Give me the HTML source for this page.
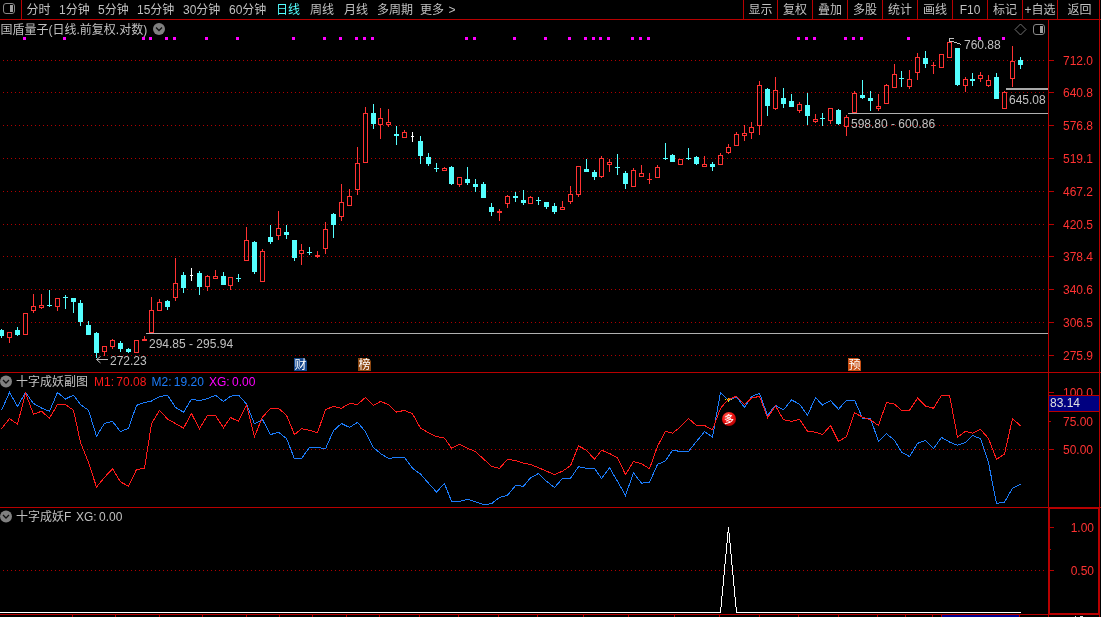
<!DOCTYPE html>
<html><head><meta charset="utf-8"><title>chart</title>
<style>
html,body{margin:0;padding:0;background:#000;}
body{width:1101px;height:617px;position:relative;overflow:hidden;font-family:"Liberation Sans","Noto Sans CJK SC",sans-serif;}
svg{position:absolute;left:0;top:0;}
.layer{position:absolute;left:0;top:0;width:1101px;height:617px;will-change:transform;}
span{position:absolute;white-space:nowrap;line-height:16px;font-size:12px;}
span.cj{}
</style></head><body>
<svg width="1101" height="617" viewBox="0 0 1101 617" shape-rendering="crispEdges">
<rect x="0" y="19" width="1101" height="1" fill="#b80000" />
<rect x="21" y="0" width="1" height="19" fill="#b80000" />
<rect x="743" y="0" width="1" height="19" fill="#b80000" />
<rect x="777" y="0" width="1" height="19" fill="#b80000" />
<rect x="812" y="0" width="1" height="19" fill="#b80000" />
<rect x="847" y="0" width="1" height="19" fill="#b80000" />
<rect x="882" y="0" width="1" height="19" fill="#b80000" />
<rect x="917" y="0" width="1" height="19" fill="#b80000" />
<rect x="952" y="0" width="1" height="19" fill="#b80000" />
<rect x="987" y="0" width="1" height="19" fill="#b80000" />
<rect x="1022" y="0" width="1" height="19" fill="#b80000" />
<rect x="1057" y="0" width="1" height="19" fill="#b80000" />
<rect x="3.5" y="3.5" width="11" height="10" rx="2.5" fill="none" stroke="#888888" stroke-width="1" shape-rendering="auto"/>
<rect x="10" y="5" width="3" height="7" fill="#a0a0a0" />
<line x1="3" y1="60.5" x2="1046" y2="60.5" stroke="#b00000" stroke-width="1" stroke-dasharray="1 3"/>
<rect x="1048" y="60" width="6" height="1" fill="#b80000" />
<line x1="3" y1="92.5" x2="1046" y2="92.5" stroke="#b00000" stroke-width="1" stroke-dasharray="1 3"/>
<rect x="1048" y="92" width="6" height="1" fill="#b80000" />
<line x1="3" y1="125.5" x2="1046" y2="125.5" stroke="#b00000" stroke-width="1" stroke-dasharray="1 3"/>
<rect x="1048" y="125" width="6" height="1" fill="#b80000" />
<line x1="3" y1="158.5" x2="1046" y2="158.5" stroke="#b00000" stroke-width="1" stroke-dasharray="1 3"/>
<rect x="1048" y="158" width="6" height="1" fill="#b80000" />
<line x1="3" y1="191.5" x2="1046" y2="191.5" stroke="#b00000" stroke-width="1" stroke-dasharray="1 3"/>
<rect x="1048" y="191" width="6" height="1" fill="#b80000" />
<line x1="3" y1="224.5" x2="1046" y2="224.5" stroke="#b00000" stroke-width="1" stroke-dasharray="1 3"/>
<rect x="1048" y="224" width="6" height="1" fill="#b80000" />
<line x1="3" y1="256.5" x2="1046" y2="256.5" stroke="#b00000" stroke-width="1" stroke-dasharray="1 3"/>
<rect x="1048" y="256" width="6" height="1" fill="#b80000" />
<line x1="3" y1="289.5" x2="1046" y2="289.5" stroke="#b00000" stroke-width="1" stroke-dasharray="1 3"/>
<rect x="1048" y="289" width="6" height="1" fill="#b80000" />
<line x1="3" y1="322.5" x2="1046" y2="322.5" stroke="#b00000" stroke-width="1" stroke-dasharray="1 3"/>
<rect x="1048" y="322" width="6" height="1" fill="#b80000" />
<line x1="3" y1="355.5" x2="1046" y2="355.5" stroke="#b00000" stroke-width="1" stroke-dasharray="1 3"/>
<rect x="1048" y="355" width="6" height="1" fill="#b80000" />
<rect x="1048" y="20" width="1" height="597" fill="#b80000" />
<rect x="1099" y="0" width="1" height="617" fill="#b80000" />
<rect x="0" y="372" width="1101" height="1" fill="#b80000" />
<rect x="0" y="507" width="1101" height="1" fill="#b80000" />
<line x1="3" y1="449.5" x2="1046" y2="449.5" stroke="#b00000" stroke-width="1" stroke-dasharray="1 3"/>
<rect x="1048" y="392" width="6" height="1" fill="#b80000" />
<rect x="1048" y="421" width="3" height="1" fill="#b80000" />
<rect x="1048" y="449" width="6" height="1" fill="#b80000" />
<line x1="3" y1="570.5" x2="1046" y2="570.5" stroke="#b00000" stroke-width="1" stroke-dasharray="1 3"/>
<rect x="1048" y="527" width="6" height="1" fill="#b80000" />
<rect x="1048" y="549" width="3" height="1" fill="#b80000" />
<rect x="1048" y="570" width="6" height="1" fill="#b80000" />
<rect x="1049" y="508" width="50" height="106" fill="none" stroke="#b80000" stroke-width="2"/>
<rect x="0" y="614" width="1048" height="1" fill="#b80000" />
<rect x="72" y="614" width="1" height="3" fill="#b80000" />
<rect x="115" y="614" width="1" height="3" fill="#b80000" />
<rect x="159" y="614" width="1" height="3" fill="#b80000" />
<rect x="202" y="614" width="1" height="3" fill="#b80000" />
<rect x="246" y="614" width="1" height="3" fill="#b80000" />
<rect x="279" y="614" width="1" height="3" fill="#b80000" />
<rect x="312" y="614" width="1" height="3" fill="#b80000" />
<rect x="346" y="614" width="1" height="3" fill="#b80000" />
<rect x="379" y="614" width="1" height="3" fill="#b80000" />
<rect x="419" y="614" width="1" height="3" fill="#b80000" />
<rect x="458" y="614" width="1" height="3" fill="#b80000" />
<rect x="498" y="614" width="1" height="3" fill="#b80000" />
<rect x="537" y="614" width="1" height="3" fill="#b80000" />
<rect x="583" y="614" width="1" height="3" fill="#b80000" />
<rect x="628" y="614" width="1" height="3" fill="#b80000" />
<rect x="674" y="614" width="1" height="3" fill="#b80000" />
<rect x="719" y="614" width="1" height="3" fill="#b80000" />
<rect x="759" y="614" width="1" height="3" fill="#b80000" />
<rect x="798" y="614" width="1" height="3" fill="#b80000" />
<rect x="838" y="614" width="1" height="3" fill="#b80000" />
<rect x="877" y="614" width="1" height="3" fill="#b80000" />
<rect x="905" y="614" width="1" height="3" fill="#b80000" />
<rect x="932" y="614" width="1" height="3" fill="#b80000" />
<rect x="941" y="614" width="1" height="3" fill="#b80000" />
<rect x="1019" y="614" width="1" height="3" fill="#b80000" />
<rect x="1048" y="614" width="1" height="3" fill="#b80000" />
<rect x="942" y="615" width="77" height="2" fill="#000090" />
<rect x="1075" y="616" width="1" height="1" fill="#e0e0e0" />
<rect x="1080" y="616" width="3" height="1" fill="#e0e0e0" />
<rect x="146" y="333" width="902" height="1" fill="#b0b0b0" />
<rect x="848" y="113" width="200" height="1" fill="#b0b0b0" />
<rect x="1006" y="88" width="42" height="2" fill="#a8a8a8" />
<rect x="23" y="37" width="3" height="3" fill="#ff00ff" />
<rect x="63" y="37" width="3" height="3" fill="#ff00ff" />
<rect x="142" y="37" width="3" height="3" fill="#ff00ff" />
<rect x="149" y="37" width="3" height="3" fill="#ff00ff" />
<rect x="165" y="37" width="3" height="3" fill="#ff00ff" />
<rect x="173" y="37" width="3" height="3" fill="#ff00ff" />
<rect x="205" y="37" width="3" height="3" fill="#ff00ff" />
<rect x="236" y="37" width="3" height="3" fill="#ff00ff" />
<rect x="292" y="37" width="3" height="3" fill="#ff00ff" />
<rect x="323" y="37" width="3" height="3" fill="#ff00ff" />
<rect x="339" y="37" width="3" height="3" fill="#ff00ff" />
<rect x="355" y="37" width="3" height="3" fill="#ff00ff" />
<rect x="363" y="37" width="3" height="3" fill="#ff00ff" />
<rect x="371" y="37" width="3" height="3" fill="#ff00ff" />
<rect x="465" y="37" width="3" height="3" fill="#ff00ff" />
<rect x="473" y="37" width="3" height="3" fill="#ff00ff" />
<rect x="513" y="37" width="3" height="3" fill="#ff00ff" />
<rect x="544" y="37" width="3" height="3" fill="#ff00ff" />
<rect x="568" y="37" width="3" height="3" fill="#ff00ff" />
<rect x="584" y="37" width="3" height="3" fill="#ff00ff" />
<rect x="592" y="37" width="3" height="3" fill="#ff00ff" />
<rect x="599" y="37" width="3" height="3" fill="#ff00ff" />
<rect x="607" y="37" width="3" height="3" fill="#ff00ff" />
<rect x="631" y="37" width="3" height="3" fill="#ff00ff" />
<rect x="639" y="37" width="3" height="3" fill="#ff00ff" />
<rect x="647" y="37" width="3" height="3" fill="#ff00ff" />
<rect x="797" y="37" width="3" height="3" fill="#ff00ff" />
<rect x="805" y="37" width="3" height="3" fill="#ff00ff" />
<rect x="813" y="37" width="3" height="3" fill="#ff00ff" />
<rect x="844" y="37" width="3" height="3" fill="#ff00ff" />
<rect x="852" y="37" width="3" height="3" fill="#ff00ff" />
<rect x="860" y="37" width="3" height="3" fill="#ff00ff" />
<rect x="907" y="37" width="3" height="3" fill="#ff00ff" />
<rect x="978" y="37" width="3" height="3" fill="#ff00ff" />
<rect x="1002" y="37" width="3" height="3" fill="#ff00ff" />
<rect x="1" y="329" width="1" height="9" fill="#54ffff" />
<rect x="-1" y="330" width="5" height="6" fill="#54ffff" />
<rect x="9" y="338" width="1" height="5" fill="#ff3232" />
<rect x="7.5" y="332.5" width="4" height="5" fill="none" stroke="#ff3232" stroke-width="1"/>
<rect x="17" y="327" width="1" height="9" fill="#54ffff" />
<rect x="15" y="330" width="5" height="5" fill="#54ffff" />
<rect x="23.5" y="313.5" width="4" height="21" fill="none" stroke="#ff3232" stroke-width="1"/>
<rect x="33" y="294" width="1" height="12" fill="#ff3232" />
<rect x="33" y="311" width="1" height="2" fill="#ff3232" />
<rect x="31.5" y="306.5" width="4" height="4" fill="none" stroke="#ff3232" stroke-width="1"/>
<rect x="41" y="294" width="1" height="11" fill="#ff3232" />
<rect x="41" y="308" width="1" height="1" fill="#ff3232" />
<rect x="39.5" y="305.5" width="4" height="2" fill="none" stroke="#ff3232" stroke-width="1"/>
<rect x="49" y="290" width="1" height="17" fill="#54ffff" />
<rect x="47" y="305" width="5" height="1" fill="#54ffff" />
<rect x="57" y="307" width="1" height="4" fill="#ff3232" />
<rect x="55.5" y="298.5" width="4" height="8" fill="none" stroke="#ff3232" stroke-width="1"/>
<rect x="65" y="295" width="1" height="14" fill="#54ffff" />
<rect x="63" y="297" width="5" height="1" fill="#54ffff" />
<rect x="73" y="298" width="1" height="15" fill="#54ffff" />
<rect x="71" y="298" width="5" height="4" fill="#54ffff" />
<rect x="80" y="300" width="1" height="26" fill="#54ffff" />
<rect x="78" y="303" width="5" height="19" fill="#54ffff" />
<rect x="88" y="321" width="1" height="14" fill="#54ffff" />
<rect x="86" y="325" width="5" height="10" fill="#54ffff" />
<rect x="96" y="332" width="1" height="26" fill="#54ffff" />
<rect x="94" y="333" width="5" height="20" fill="#54ffff" />
<rect x="104" y="352" width="1" height="4" fill="#ff3232" />
<rect x="102.5" y="346.5" width="4" height="5" fill="none" stroke="#ff3232" stroke-width="1"/>
<rect x="112" y="339" width="1" height="1" fill="#ff3232" />
<rect x="112" y="347" width="1" height="2" fill="#ff3232" />
<rect x="110.5" y="340.5" width="4" height="6" fill="none" stroke="#ff3232" stroke-width="1"/>
<rect x="120" y="341" width="1" height="11" fill="#54ffff" />
<rect x="118" y="343" width="5" height="6" fill="#54ffff" />
<rect x="128" y="348" width="1" height="5" fill="#54ffff" />
<rect x="126" y="349" width="5" height="3" fill="#54ffff" />
<rect x="134.5" y="340.5" width="4" height="12" fill="none" stroke="#ff3232" stroke-width="1"/>
<rect x="144" y="336" width="1" height="5" fill="#ff3232" />
<rect x="142" y="339" width="5" height="2" fill="#ff3232" />
<rect x="151" y="297" width="1" height="13" fill="#ff3232" />
<rect x="149.5" y="310.5" width="4" height="22" fill="none" stroke="#ff3232" stroke-width="1"/>
<rect x="159" y="299" width="1" height="3" fill="#ff3232" />
<rect x="157.5" y="302.5" width="4" height="8" fill="none" stroke="#ff3232" stroke-width="1"/>
<rect x="167" y="300" width="1" height="10" fill="#54ffff" />
<rect x="165" y="301" width="5" height="6" fill="#54ffff" />
<rect x="175" y="258" width="1" height="25" fill="#ff3232" />
<rect x="175" y="298" width="1" height="3" fill="#ff3232" />
<rect x="173.5" y="283.5" width="4" height="14" fill="none" stroke="#ff3232" stroke-width="1"/>
<rect x="183" y="272" width="1" height="21" fill="#54ffff" />
<rect x="181" y="275" width="5" height="13" fill="#54ffff" />
<rect x="191" y="268" width="1" height="13" fill="#ffffff" />
<rect x="190" y="275" width="3" height="1" fill="#ffffff" />
<rect x="199" y="271" width="1" height="24" fill="#54ffff" />
<rect x="197" y="273" width="5" height="14" fill="#54ffff" />
<rect x="207" y="275" width="1" height="1" fill="#ff3232" />
<rect x="207" y="287" width="1" height="4" fill="#ff3232" />
<rect x="205.5" y="276.5" width="4" height="10" fill="none" stroke="#ff3232" stroke-width="1"/>
<rect x="215" y="270" width="1" height="6" fill="#ff3232" />
<rect x="213.5" y="276.5" width="4" height="2" fill="none" stroke="#ff3232" stroke-width="1"/>
<rect x="223" y="272" width="1" height="13" fill="#54ffff" />
<rect x="221" y="276" width="5" height="9" fill="#54ffff" />
<rect x="230" y="286" width="1" height="4" fill="#ff3232" />
<rect x="228.5" y="277.5" width="4" height="8" fill="none" stroke="#ff3232" stroke-width="1"/>
<rect x="238" y="274" width="1" height="8" fill="#54ffff" />
<rect x="236" y="278" width="5" height="1" fill="#54ffff" />
<rect x="246" y="227" width="1" height="13" fill="#ff3232" />
<rect x="244.5" y="240.5" width="4" height="20" fill="none" stroke="#ff3232" stroke-width="1"/>
<rect x="254" y="241" width="1" height="33" fill="#54ffff" />
<rect x="252" y="242" width="5" height="30" fill="#54ffff" />
<rect x="262" y="249" width="1" height="2" fill="#ff3232" />
<rect x="260.5" y="251.5" width="4" height="30" fill="none" stroke="#ff3232" stroke-width="1"/>
<rect x="270" y="225" width="1" height="19" fill="#54ffff" />
<rect x="268" y="237" width="5" height="5" fill="#54ffff" />
<rect x="278" y="211" width="1" height="17" fill="#ff3232" />
<rect x="278" y="236" width="1" height="4" fill="#ff3232" />
<rect x="276.5" y="228.5" width="4" height="7" fill="none" stroke="#ff3232" stroke-width="1"/>
<rect x="286" y="225" width="1" height="14" fill="#54ffff" />
<rect x="284" y="232" width="5" height="3" fill="#54ffff" />
<rect x="294" y="240" width="1" height="21" fill="#54ffff" />
<rect x="292" y="240" width="5" height="18" fill="#54ffff" />
<rect x="301" y="244" width="1" height="6" fill="#ff3232" />
<rect x="301" y="254" width="1" height="11" fill="#ff3232" />
<rect x="299.5" y="250.5" width="4" height="3" fill="none" stroke="#ff3232" stroke-width="1"/>
<rect x="309" y="247" width="1" height="8" fill="#54ffff" />
<rect x="307" y="252" width="5" height="1" fill="#54ffff" />
<rect x="317" y="251" width="1" height="7" fill="#ff3232" />
<rect x="315" y="255" width="5" height="2" fill="#ff3232" />
<rect x="325" y="222" width="1" height="7" fill="#ff3232" />
<rect x="325" y="249" width="1" height="5" fill="#ff3232" />
<rect x="323.5" y="229.5" width="4" height="19" fill="none" stroke="#ff3232" stroke-width="1"/>
<rect x="333" y="213" width="1" height="25" fill="#54ffff" />
<rect x="331" y="214" width="5" height="11" fill="#54ffff" />
<rect x="341" y="184" width="1" height="18" fill="#ff3232" />
<rect x="341" y="217" width="1" height="4" fill="#ff3232" />
<rect x="339.5" y="202.5" width="4" height="14" fill="none" stroke="#ff3232" stroke-width="1"/>
<rect x="349" y="189" width="1" height="7" fill="#ff3232" />
<rect x="347.5" y="196.5" width="4" height="9" fill="none" stroke="#ff3232" stroke-width="1"/>
<rect x="357" y="147" width="1" height="16" fill="#ff3232" />
<rect x="357" y="190" width="1" height="5" fill="#ff3232" />
<rect x="355.5" y="163.5" width="4" height="26" fill="none" stroke="#ff3232" stroke-width="1"/>
<rect x="365" y="107" width="1" height="6" fill="#ff3232" />
<rect x="363.5" y="113.5" width="4" height="49" fill="none" stroke="#ff3232" stroke-width="1"/>
<rect x="373" y="104" width="1" height="25" fill="#54ffff" />
<rect x="371" y="113" width="5" height="11" fill="#54ffff" />
<rect x="380" y="108" width="1" height="10" fill="#ff3232" />
<rect x="380" y="125" width="1" height="14" fill="#ff3232" />
<rect x="378.5" y="118.5" width="4" height="6" fill="none" stroke="#ff3232" stroke-width="1"/>
<rect x="388" y="109" width="1" height="13" fill="#ff3232" />
<rect x="388" y="125" width="1" height="2" fill="#ff3232" />
<rect x="386.5" y="122.5" width="4" height="2" fill="none" stroke="#ff3232" stroke-width="1"/>
<rect x="396" y="126" width="1" height="19" fill="#54ffff" />
<rect x="394" y="134" width="5" height="2" fill="#54ffff" />
<rect x="404" y="130" width="1" height="2" fill="#ff3232" />
<rect x="402.5" y="132.5" width="4" height="5" fill="none" stroke="#ff3232" stroke-width="1"/>
<rect x="412" y="132" width="1" height="10" fill="#ffffff" />
<rect x="411" y="136" width="3" height="1" fill="#ffffff" />
<rect x="420" y="136" width="1" height="28" fill="#54ffff" />
<rect x="418" y="141" width="5" height="15" fill="#54ffff" />
<rect x="428" y="153" width="1" height="13" fill="#54ffff" />
<rect x="426" y="157" width="5" height="7" fill="#54ffff" />
<rect x="436" y="163" width="1" height="9" fill="#54ffff" />
<rect x="434" y="168" width="5" height="1" fill="#54ffff" />
<rect x="444" y="167" width="1" height="1" fill="#ff3232" />
<rect x="442.5" y="168.5" width="4" height="2" fill="none" stroke="#ff3232" stroke-width="1"/>
<rect x="451" y="166" width="1" height="19" fill="#54ffff" />
<rect x="449" y="167" width="5" height="17" fill="#54ffff" />
<rect x="459" y="185" width="1" height="2" fill="#ff3232" />
<rect x="457.5" y="177.5" width="4" height="7" fill="none" stroke="#ff3232" stroke-width="1"/>
<rect x="467" y="167" width="1" height="18" fill="#54ffff" />
<rect x="465" y="179" width="5" height="4" fill="#54ffff" />
<rect x="475" y="179" width="1" height="13" fill="#54ffff" />
<rect x="473" y="184" width="5" height="3" fill="#54ffff" />
<rect x="483" y="182" width="1" height="16" fill="#54ffff" />
<rect x="481" y="184" width="5" height="14" fill="#54ffff" />
<rect x="491" y="203" width="1" height="13" fill="#54ffff" />
<rect x="489" y="207" width="5" height="5" fill="#54ffff" />
<rect x="499" y="209" width="1" height="12" fill="#ff3232" />
<rect x="497" y="211" width="5" height="2" fill="#ff3232" />
<rect x="507" y="195" width="1" height="1" fill="#ff3232" />
<rect x="507" y="204" width="1" height="4" fill="#ff3232" />
<rect x="505.5" y="196.5" width="4" height="7" fill="none" stroke="#ff3232" stroke-width="1"/>
<rect x="515" y="192" width="1" height="10" fill="#54ffff" />
<rect x="513" y="196" width="5" height="2" fill="#54ffff" />
<rect x="523" y="190" width="1" height="15" fill="#54ffff" />
<rect x="521" y="200" width="5" height="3" fill="#54ffff" />
<rect x="530" y="196" width="1" height="1" fill="#ff3232" />
<rect x="528.5" y="197.5" width="4" height="6" fill="none" stroke="#ff3232" stroke-width="1"/>
<rect x="538" y="197" width="1" height="8" fill="#54ffff" />
<rect x="536" y="200" width="5" height="1" fill="#54ffff" />
<rect x="546" y="202" width="1" height="7" fill="#54ffff" />
<rect x="544" y="202" width="5" height="5" fill="#54ffff" />
<rect x="554" y="203" width="1" height="11" fill="#54ffff" />
<rect x="552" y="206" width="5" height="6" fill="#54ffff" />
<rect x="562" y="201" width="1" height="6" fill="#ff3232" />
<rect x="560.5" y="207.5" width="4" height="2" fill="none" stroke="#ff3232" stroke-width="1"/>
<rect x="570" y="186" width="1" height="8" fill="#ff3232" />
<rect x="570" y="202" width="1" height="2" fill="#ff3232" />
<rect x="568.5" y="194.5" width="4" height="7" fill="none" stroke="#ff3232" stroke-width="1"/>
<rect x="578" y="195" width="1" height="2" fill="#ff3232" />
<rect x="576.5" y="166.5" width="4" height="28" fill="none" stroke="#ff3232" stroke-width="1"/>
<rect x="586" y="159" width="1" height="13" fill="#54ffff" />
<rect x="584" y="169" width="5" height="3" fill="#54ffff" />
<rect x="594" y="170" width="1" height="10" fill="#54ffff" />
<rect x="592" y="172" width="5" height="5" fill="#54ffff" />
<rect x="601" y="156" width="1" height="2" fill="#ff3232" />
<rect x="601" y="177" width="1" height="1" fill="#ff3232" />
<rect x="599.5" y="158.5" width="4" height="18" fill="none" stroke="#ff3232" stroke-width="1"/>
<rect x="609" y="159" width="1" height="3" fill="#ff3232" />
<rect x="609" y="165" width="1" height="7" fill="#ff3232" />
<rect x="607.5" y="162.5" width="4" height="2" fill="none" stroke="#ff3232" stroke-width="1"/>
<rect x="617" y="154" width="1" height="21" fill="#54ffff" />
<rect x="615" y="167" width="5" height="1" fill="#54ffff" />
<rect x="625" y="171" width="1" height="18" fill="#54ffff" />
<rect x="623" y="173" width="5" height="11" fill="#54ffff" />
<rect x="633" y="168" width="1" height="2" fill="#ff3232" />
<rect x="631.5" y="170.5" width="4" height="16" fill="none" stroke="#ff3232" stroke-width="1"/>
<rect x="641" y="165" width="1" height="8" fill="#ff3232" />
<rect x="639.5" y="173.5" width="4" height="3" fill="none" stroke="#ff3232" stroke-width="1"/>
<rect x="649" y="173" width="1" height="11" fill="#ff3232" />
<rect x="647" y="179" width="5" height="1" fill="#ff3232" />
<rect x="657" y="165" width="1" height="2" fill="#ff3232" />
<rect x="655.5" y="167.5" width="4" height="10" fill="none" stroke="#ff3232" stroke-width="1"/>
<rect x="665" y="143" width="1" height="17" fill="#54ffff" />
<rect x="663" y="158" width="5" height="1" fill="#54ffff" />
<rect x="672" y="154" width="1" height="8" fill="#54ffff" />
<rect x="670" y="155" width="5" height="7" fill="#54ffff" />
<rect x="678.5" y="159.5" width="4" height="5" fill="none" stroke="#ff3232" stroke-width="1"/>
<rect x="688" y="148" width="1" height="12" fill="#54ffff" />
<rect x="686" y="158" width="5" height="1" fill="#54ffff" />
<rect x="696" y="156" width="1" height="9" fill="#54ffff" />
<rect x="694" y="157" width="5" height="7" fill="#54ffff" />
<rect x="704" y="156" width="1" height="8" fill="#ff3232" />
<rect x="702.5" y="164.5" width="4" height="2" fill="none" stroke="#ff3232" stroke-width="1"/>
<rect x="712" y="162" width="1" height="9" fill="#54ffff" />
<rect x="710" y="164" width="5" height="3" fill="#54ffff" />
<rect x="720" y="153" width="1" height="2" fill="#ff3232" />
<rect x="718.5" y="155.5" width="4" height="9" fill="none" stroke="#ff3232" stroke-width="1"/>
<rect x="728" y="144" width="1" height="3" fill="#ff3232" />
<rect x="728" y="153" width="1" height="1" fill="#ff3232" />
<rect x="726.5" y="147.5" width="4" height="5" fill="none" stroke="#ff3232" stroke-width="1"/>
<rect x="736" y="132" width="1" height="2" fill="#ff3232" />
<rect x="734.5" y="134.5" width="4" height="11" fill="none" stroke="#ff3232" stroke-width="1"/>
<rect x="744" y="125" width="1" height="8" fill="#ff3232" />
<rect x="744" y="136" width="1" height="5" fill="#ff3232" />
<rect x="742.5" y="133.5" width="4" height="2" fill="none" stroke="#ff3232" stroke-width="1"/>
<rect x="751" y="122" width="1" height="5" fill="#ff3232" />
<rect x="751" y="133" width="1" height="6" fill="#ff3232" />
<rect x="749.5" y="127.5" width="4" height="5" fill="none" stroke="#ff3232" stroke-width="1"/>
<rect x="759" y="81" width="1" height="4" fill="#ff3232" />
<rect x="759" y="126" width="1" height="9" fill="#ff3232" />
<rect x="757.5" y="85.5" width="4" height="40" fill="none" stroke="#ff3232" stroke-width="1"/>
<rect x="767" y="88" width="1" height="28" fill="#54ffff" />
<rect x="765" y="89" width="5" height="17" fill="#54ffff" />
<rect x="775" y="77" width="1" height="13" fill="#ff3232" />
<rect x="775" y="109" width="1" height="1" fill="#ff3232" />
<rect x="773.5" y="90.5" width="4" height="18" fill="none" stroke="#ff3232" stroke-width="1"/>
<rect x="783" y="88" width="1" height="20" fill="#54ffff" />
<rect x="781" y="98" width="5" height="6" fill="#54ffff" />
<rect x="791" y="94" width="1" height="13" fill="#54ffff" />
<rect x="789" y="101" width="5" height="6" fill="#54ffff" />
<rect x="799" y="102" width="1" height="2" fill="#ff3232" />
<rect x="799" y="111" width="1" height="2" fill="#ff3232" />
<rect x="797.5" y="104.5" width="4" height="6" fill="none" stroke="#ff3232" stroke-width="1"/>
<rect x="807" y="93" width="1" height="32" fill="#54ffff" />
<rect x="805" y="105" width="5" height="11" fill="#54ffff" />
<rect x="815" y="114" width="1" height="5" fill="#ff3232" />
<rect x="815" y="122" width="1" height="1" fill="#ff3232" />
<rect x="813.5" y="119.5" width="4" height="2" fill="none" stroke="#ff3232" stroke-width="1"/>
<rect x="822" y="113" width="1" height="13" fill="#54ffff" />
<rect x="820" y="118" width="5" height="1" fill="#54ffff" />
<rect x="830" y="121" width="1" height="3" fill="#ff3232" />
<rect x="828.5" y="108.5" width="4" height="12" fill="none" stroke="#ff3232" stroke-width="1"/>
<rect x="838" y="109" width="1" height="16" fill="#54ffff" />
<rect x="836" y="110" width="5" height="14" fill="#54ffff" />
<rect x="846" y="115" width="1" height="2" fill="#ff3232" />
<rect x="846" y="127" width="1" height="9" fill="#ff3232" />
<rect x="844.5" y="117.5" width="4" height="9" fill="none" stroke="#ff3232" stroke-width="1"/>
<rect x="854" y="91" width="1" height="2" fill="#ff3232" />
<rect x="852.5" y="93.5" width="4" height="19" fill="none" stroke="#ff3232" stroke-width="1"/>
<rect x="862" y="80" width="1" height="19" fill="#54ffff" />
<rect x="860" y="95" width="5" height="3" fill="#54ffff" />
<rect x="870" y="91" width="1" height="20" fill="#54ffff" />
<rect x="868" y="98" width="5" height="3" fill="#54ffff" />
<rect x="878" y="94" width="1" height="12" fill="#ff3232" />
<rect x="878" y="109" width="1" height="2" fill="#ff3232" />
<rect x="876.5" y="106.5" width="4" height="2" fill="none" stroke="#ff3232" stroke-width="1"/>
<rect x="886" y="84" width="1" height="1" fill="#ff3232" />
<rect x="884.5" y="85.5" width="4" height="18" fill="none" stroke="#ff3232" stroke-width="1"/>
<rect x="894" y="64" width="1" height="10" fill="#ff3232" />
<rect x="892.5" y="74.5" width="4" height="13" fill="none" stroke="#ff3232" stroke-width="1"/>
<rect x="901" y="71" width="1" height="16" fill="#54ffff" />
<rect x="899" y="78" width="5" height="1" fill="#54ffff" />
<rect x="909" y="70" width="1" height="9" fill="#ff3232" />
<rect x="909" y="87" width="1" height="2" fill="#ff3232" />
<rect x="907.5" y="79.5" width="4" height="7" fill="none" stroke="#ff3232" stroke-width="1"/>
<rect x="917" y="53" width="1" height="4" fill="#ff3232" />
<rect x="917" y="73" width="1" height="7" fill="#ff3232" />
<rect x="915.5" y="57.5" width="4" height="15" fill="none" stroke="#ff3232" stroke-width="1"/>
<rect x="925" y="51" width="1" height="17" fill="#54ffff" />
<rect x="923" y="58" width="5" height="6" fill="#54ffff" />
<rect x="933" y="62" width="1" height="12" fill="#ff3232" />
<rect x="931" y="65" width="5" height="1" fill="#ff3232" />
<rect x="939.5" y="54.5" width="4" height="13" fill="none" stroke="#ff3232" stroke-width="1"/>
<rect x="947.5" y="42.5" width="4" height="15" fill="none" stroke="#ff3232" stroke-width="1"/>
<rect x="957" y="48" width="1" height="38" fill="#54ffff" />
<rect x="955" y="48" width="5" height="37" fill="#54ffff" />
<rect x="965" y="77" width="1" height="2" fill="#ff3232" />
<rect x="965" y="86" width="1" height="6" fill="#ff3232" />
<rect x="963.5" y="79.5" width="4" height="6" fill="none" stroke="#ff3232" stroke-width="1"/>
<rect x="972" y="73" width="1" height="13" fill="#54ffff" />
<rect x="970" y="79" width="5" height="2" fill="#54ffff" />
<rect x="980" y="72" width="1" height="3" fill="#ff3232" />
<rect x="980" y="79" width="1" height="3" fill="#ff3232" />
<rect x="978.5" y="75.5" width="4" height="3" fill="none" stroke="#ff3232" stroke-width="1"/>
<rect x="988" y="75" width="1" height="5" fill="#ff3232" />
<rect x="988" y="86" width="1" height="1" fill="#ff3232" />
<rect x="986.5" y="80.5" width="4" height="5" fill="none" stroke="#ff3232" stroke-width="1"/>
<rect x="996" y="73" width="1" height="26" fill="#54ffff" />
<rect x="994" y="77" width="5" height="22" fill="#54ffff" />
<rect x="1004" y="91" width="1" height="1" fill="#ff3232" />
<rect x="1002.5" y="92.5" width="4" height="16" fill="none" stroke="#ff3232" stroke-width="1"/>
<rect x="1012" y="46" width="1" height="15" fill="#ff3232" />
<rect x="1012" y="79" width="1" height="8" fill="#ff3232" />
<rect x="1010.5" y="61.5" width="4" height="17" fill="none" stroke="#ff3232" stroke-width="1"/>
<rect x="1020" y="57" width="1" height="12" fill="#54ffff" />
<rect x="1018" y="60" width="5" height="5" fill="#54ffff" />
<polyline points="1.5,410.3 9.5,392.4 17.5,406.4 25.5,392.4 33.5,403.5 41.5,408.0 49.5,411.3 57.5,392.4 65.5,399.0 73.5,395.1 80.5,404.5 88.5,410.3 96.5,436.2 104.5,423.3 112.5,421.4 120.5,431.7 128.5,428.2 136.5,405.4 144.5,402.5 151.5,401.0 159.5,396.7 167.5,395.1 175.5,407.4 183.5,412.2 191.5,399.2 199.5,400.6 207.5,398.6 215.5,395.3 223.5,401.5 230.5,396.3 238.5,395.1 246.5,404.1 254.5,423.9 262.5,419.6 270.5,434.6 278.5,432.3 286.5,438.5 294.5,458.9 301.5,458.5 309.5,447.3 317.5,447.3 325.5,448.8 333.5,430.7 341.5,423.5 349.5,427.4 357.5,422.4 365.5,431.7 373.5,447.6 380.5,453.5 388.5,458.5 396.5,457.4 404.5,457.4 412.5,468.3 420.5,474.1 428.5,483.2 436.5,492.0 444.5,483.6 451.5,501.3 459.5,501.3 467.5,499.4 475.5,501.7 483.5,504.6 491.5,503.7 499.5,497.5 507.5,495.3 515.5,485.6 523.5,486.2 530.5,477.8 538.5,473.5 546.5,481.3 554.5,487.5 562.5,478.4 570.5,478.4 578.5,466.7 586.5,468.3 594.5,468.3 601.5,478.4 609.5,467.7 617.5,481.3 625.5,495.5 633.5,472.9 641.5,483.2 649.5,482.3 657.5,464.4 665.5,460.9 672.5,450.2 680.5,451.5 688.5,451.5 696.5,441.4 704.5,431.7 712.5,437.1 720.5,392.4 728.5,400.6 736.5,396.7 744.5,407.4 751.5,396.7 759.5,393.2 767.5,415.2 775.5,405.4 783.5,409.9 791.5,400.0 799.5,404.1 807.5,415.2 815.5,397.6 822.5,405.0 830.5,400.6 838.5,409.3 846.5,400.2 854.5,400.2 862.5,418.1 870.5,418.5 878.5,441.4 886.5,433.6 894.5,440.4 901.5,452.1 909.5,456.6 917.5,443.4 925.5,440.4 933.5,448.6 941.5,437.5 949.5,442.0 957.5,445.3 965.5,442.4 972.5,435.6 980.5,438.5 988.5,462.8 996.5,503.3 1004.5,502.3 1012.5,488.1 1020.5,484.2" fill="none" stroke="#1c7cfa" stroke-width="1"/>
<polyline points="1.5,428.8 9.5,418.5 17.5,424.3 25.5,393.2 33.5,414.2 41.5,411.3 49.5,418.1 57.5,404.5 65.5,404.5 73.5,410.3 80.5,442.4 88.5,462.4 96.5,487.1 104.5,477.4 112.5,468.7 120.5,481.9 128.5,486.2 136.5,469.6 144.5,468.1 151.5,423.9 159.5,410.3 167.5,419.0 175.5,423.5 183.5,428.2 191.5,413.6 199.5,428.8 207.5,415.5 215.5,415.5 223.5,427.8 230.5,417.5 238.5,421.4 246.5,405.4 254.5,436.6 262.5,417.1 270.5,408.3 278.5,408.3 286.5,415.2 294.5,434.6 301.5,428.8 309.5,430.3 317.5,432.7 325.5,409.7 333.5,406.4 341.5,408.3 349.5,403.5 357.5,404.5 365.5,397.3 373.5,405.4 380.5,401.5 388.5,404.5 396.5,412.2 404.5,410.3 412.5,413.8 420.5,428.2 428.5,432.7 436.5,436.6 444.5,438.1 451.5,448.2 459.5,444.3 467.5,448.2 475.5,451.7 483.5,458.9 491.5,466.3 499.5,468.3 507.5,459.3 515.5,460.5 523.5,463.2 530.5,464.4 538.5,467.7 546.5,471.2 554.5,474.5 562.5,471.2 570.5,465.7 578.5,445.9 586.5,450.2 594.5,459.3 601.5,450.2 609.5,453.5 617.5,458.0 625.5,474.5 633.5,461.5 641.5,463.8 649.5,468.7 657.5,446.3 665.5,431.3 672.5,433.2 680.5,426.8 688.5,418.5 696.5,425.5 704.5,425.5 712.5,429.7 720.5,408.3 728.5,399.2 736.5,396.3 744.5,404.5 751.5,398.2 759.5,396.3 767.5,417.7 775.5,406.0 783.5,419.6 791.5,421.4 799.5,419.4 807.5,431.1 815.5,432.3 822.5,434.6 830.5,425.5 838.5,441.4 846.5,436.6 854.5,412.8 862.5,417.1 870.5,420.0 878.5,425.5 886.5,402.5 894.5,404.1 901.5,410.3 909.5,410.3 917.5,398.2 925.5,406.0 933.5,408.3 941.5,395.3 949.5,395.3 957.5,437.1 965.5,431.3 972.5,433.2 980.5,429.4 988.5,438.5 996.5,459.3 1004.5,454.1 1012.5,418.5 1020.5,425.9" fill="none" stroke="#ff1a1a" stroke-width="1"/>
<polyline points="0,612.5 720.5,612.5 728.5,527 736.5,612.5 1021,612.5" fill="none" stroke="#ffffff" stroke-width="1"/>
<path d="M294 358 h10 l3 3 v10 h-13 z" fill="#14468c" shape-rendering="auto"/>
<path d="M358 358 h10 l3 3 v10 h-13 z" fill="#8c4610" shape-rendering="auto"/>
<path d="M848 358 h10 l3 3 v10 h-13 z" fill="#c85014" shape-rendering="auto"/>
<g shape-rendering="auto"><circle cx="159" cy="29" r="6" fill="#808080"/><path d="M156 27.5 l3 3 l3 -3" fill="none" stroke="#101010" stroke-width="1.3"/></g>
<g shape-rendering="auto"><circle cx="6" cy="381.5" r="6" fill="#808080"/><path d="M3 380.0 l3 3 l3 -3" fill="none" stroke="#101010" stroke-width="1.3"/></g>
<g shape-rendering="auto"><circle cx="6" cy="516.5" r="6" fill="#808080"/><path d="M3 515.0 l3 3 l3 -3" fill="none" stroke="#101010" stroke-width="1.3"/></g>
<g shape-rendering="auto"><path d="M1020.5 24 l5.5 5.5 l-5.5 5.5 l-5.5 -5.5 z" fill="none" stroke="#707070" stroke-width="1"/><rect x="1033.5" y="24.5" width="11" height="10" rx="2.5" fill="none" stroke="#888888"/><rect x="1040" y="26" width="3" height="7" fill="#a0a0a0" shape-rendering="crispEdges"/></g>
<g fill="none" stroke="#c0c0c0" stroke-width="1"><path d="M949.5 42 V38.5 H953.5"/><path d="M949.5 41.5 H953 L961 44.5"/></g>
<g shape-rendering="auto" fill="none" stroke="#c0c0c0" stroke-width="1"><path d="M96.5 359.5 h11.5"/><path d="M100.5 356.5 l-4 3 l4 3.5"/></g>
<g shape-rendering="auto"><defs><radialGradient id="rb" cx="0.4" cy="0.3" r="0.8"><stop offset="0" stop-color="#ff6a5a"/><stop offset="0.5" stop-color="#ee1111"/><stop offset="1" stop-color="#a00000"/></radialGradient></defs><circle cx="729" cy="419" r="7" fill="url(#rb)"/></g>
<rect x="725" y="399" width="1" height="1" fill="#e8e000" />
<rect x="731" y="399" width="1" height="1" fill="#e8e000" />
<rect x="728" y="398" width="1" height="1" fill="#e8e000" />
<rect x="727" y="399" width="1" height="1" fill="#e8e000" />
<rect x="729" y="399" width="1" height="1" fill="#e8e000" />
<rect x="728" y="400" width="1" height="1" fill="#e8e000" />
<rect x="728" y="401" width="1" height="1" fill="#e8e000" />
</svg>
<div class="layer">
<span class="cj" style="left:26.5px;top:2px;color:#c0c0c0;font-size:12px;">分时</span>
<span class="cj" style="left:59px;top:2px;color:#c0c0c0;font-size:12px;">1分钟</span>
<span class="cj" style="left:98px;top:2px;color:#c0c0c0;font-size:12px;">5分钟</span>
<span class="cj" style="left:137px;top:2px;color:#c0c0c0;font-size:12px;">15分钟</span>
<span class="cj" style="left:183px;top:2px;color:#c0c0c0;font-size:12px;">30分钟</span>
<span class="cj" style="left:229px;top:2px;color:#c0c0c0;font-size:12px;">60分钟</span>
<span class="cj" style="left:276px;top:2px;color:#54ffff;font-size:12px;">日线</span>
<span class="cj" style="left:310px;top:2px;color:#c0c0c0;font-size:12px;">周线</span>
<span class="cj" style="left:344px;top:2px;color:#c0c0c0;font-size:12px;">月线</span>
<span class="cj" style="left:377px;top:2px;color:#c0c0c0;font-size:12px;">多周期</span>
<span class="cj" style="left:420px;top:2px;color:#c0c0c0;font-size:12px;">更多</span>
<span class="cj" style="left:448.5px;top:2px;color:#c0c0c0;font-size:12px;">&gt;</span>
<span class="cj" style="left:744px;top:2px;color:#c0c0c0;font-size:12px;width:33px;text-align:center;">显示</span>
<span class="cj" style="left:778px;top:2px;color:#c0c0c0;font-size:12px;width:34px;text-align:center;">复权</span>
<span class="cj" style="left:813px;top:2px;color:#c0c0c0;font-size:12px;width:34px;text-align:center;">叠加</span>
<span class="cj" style="left:848px;top:2px;color:#c0c0c0;font-size:12px;width:34px;text-align:center;">多股</span>
<span class="cj" style="left:883px;top:2px;color:#c0c0c0;font-size:12px;width:34px;text-align:center;">统计</span>
<span class="cj" style="left:918px;top:2px;color:#c0c0c0;font-size:12px;width:34px;text-align:center;">画线</span>
<span class="cj" style="left:953px;top:2px;color:#c0c0c0;font-size:12px;width:34px;text-align:center;">F10</span>
<span class="cj" style="left:988px;top:2px;color:#c0c0c0;font-size:12px;width:34px;text-align:center;">标记</span>
<span class="cj" style="left:1023px;top:2px;color:#c0c0c0;font-size:12px;width:34px;text-align:center;">+自选</span>
<span class="cj" style="left:1058px;top:2px;color:#c0c0c0;font-size:12px;width:43px;text-align:center;">返回</span>
<span class="cj" style="left:0.5px;top:21.5px;color:#c0c0c0;font-size:12px;">国盾量子(日线.前复权.对数)</span>
<span class="cj" style="left:16px;top:374px;color:#c0c0c0;font-size:12px;">十字成妖副图</span>
<span class="" style="left:94px;top:373.5px;color:#ff1a1a;font-size:12px;word-spacing:-1px;">M1: 70.08</span>
<span class="" style="left:151.5px;top:373.5px;color:#1c7cfa;font-size:12px;word-spacing:-1px;">M2: 19.20</span>
<span class="" style="left:209px;top:373.5px;color:#ff00ff;font-size:12px;word-spacing:-1px;">XG: 0.00</span>
<span class="cj" style="left:16px;top:508.5px;color:#c0c0c0;font-size:12px;">十字成妖F</span>
<span class="" style="left:76px;top:508.5px;color:#c0c0c0;font-size:12px;word-spacing:-1px;">XG: 0.00</span>
<span class="" style="left:149px;top:336px;color:#c0c0c0;font-size:12px;">294.85 - 295.94</span>
<span class="" style="left:110px;top:353px;color:#c0c0c0;font-size:12px;">272.23</span>
<span class="" style="left:851px;top:116px;color:#c0c0c0;font-size:12px;">598.80 - 600.86</span>
<span class="" style="left:1009px;top:92px;color:#c0c0c0;font-size:12px;">645.08</span>
<span class="" style="left:964px;top:37px;color:#c0c0c0;font-size:12px;">760.88</span>
<span class="" style="left:1063px;top:53px;color:#ff3232;font-size:12px;">712.0</span>
<span class="" style="left:1063px;top:85px;color:#ff3232;font-size:12px;">640.8</span>
<span class="" style="left:1063px;top:118px;color:#ff3232;font-size:12px;">576.8</span>
<span class="" style="left:1063px;top:151px;color:#ff3232;font-size:12px;">519.1</span>
<span class="" style="left:1063px;top:184px;color:#ff3232;font-size:12px;">467.2</span>
<span class="" style="left:1063px;top:217px;color:#ff3232;font-size:12px;">420.5</span>
<span class="" style="left:1063px;top:249px;color:#ff3232;font-size:12px;">378.4</span>
<span class="" style="left:1063px;top:282px;color:#ff3232;font-size:12px;">340.6</span>
<span class="" style="left:1063px;top:315px;color:#ff3232;font-size:12px;">306.5</span>
<span class="" style="left:1063px;top:348px;color:#ff3232;font-size:12px;">275.9</span>
<span class="" style="left:1063px;top:385px;color:#ff3232;font-size:12px;">100.0</span>
<span class="" style="left:1063px;top:414px;color:#ff3232;font-size:12px;">75.00</span>
<span class="" style="left:1063px;top:442px;color:#ff3232;font-size:12px;">50.00</span>
<span class="" style="left:1064px;top:520px;color:#ff3232;font-size:12px;width:30px;text-align:right;">1.00</span>
<span class="" style="left:1064px;top:563px;color:#ff3232;font-size:12px;width:30px;text-align:right;">0.50</span>
<span class="" style="left:294.5px;top:357px;color:#ffffff;font-size:12px;">财</span>
<span class="" style="left:358.5px;top:357px;color:#ffffff;font-size:12px;">榜</span>
<span class="" style="left:848.5px;top:357px;color:#ffffff;font-size:12px;">预</span>
<span class="" style="left:724px;top:411.5px;color:#ffffff;font-size:10px;font-weight:500;">多</span>
</div>
<svg width="1101" height="617" viewBox="0 0 1101 617" shape-rendering="crispEdges"><rect x="1049" y="396" width="50" height="15" fill="#000080"/><rect x="1048" y="395" width="52" height="1" fill="#b80000"/><rect x="1048" y="411" width="52" height="1" fill="#b80000"/><rect x="1099" y="395" width="1" height="17" fill="#b80000"/></svg>
<div class="layer">
<span class="" style="left:1050px;top:395px;color:#e0e0e0;font-size:12px;">83.14</span>
</div>
</body></html>
